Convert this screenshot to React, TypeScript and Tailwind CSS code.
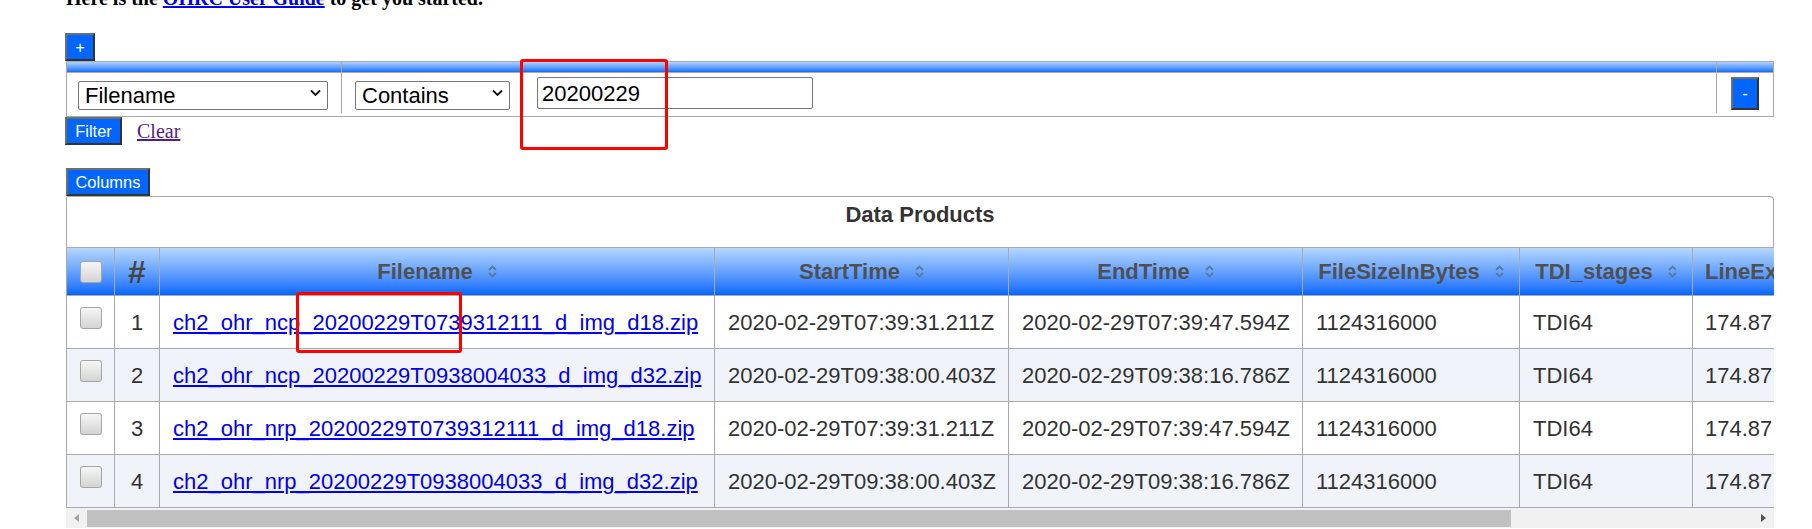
import React from "react";

const rows = [
  {
    n: 1,
    file: "ch2_ohr_ncp_20200229T0739312111_d_img_d18.zip",
    start: "2020-02-29T07:39:31.211Z",
    end: "2020-02-29T07:39:47.594Z",
  },
  {
    n: 2,
    file: "ch2_ohr_ncp_20200229T0938004033_d_img_d32.zip",
    start: "2020-02-29T09:38:00.403Z",
    end: "2020-02-29T09:38:16.786Z",
  },
  {
    n: 3,
    file: "ch2_ohr_nrp_20200229T0739312111_d_img_d18.zip",
    start: "2020-02-29T07:39:31.211Z",
    end: "2020-02-29T07:39:47.594Z",
  },
  {
    n: 4,
    file: "ch2_ohr_nrp_20200229T0938004033_d_img_d32.zip",
    start: "2020-02-29T09:38:00.403Z",
    end: "2020-02-29T09:38:16.786Z",
  },
];

const btn =
  "bg-[#0066ff] text-white text-[16.5px] leading-none border-2 border-t-[#6e6e6e] border-l-[#6e6e6e] border-b-[#333] border-r-[#333] flex items-center justify-center";

function SortIcon() {
  return (
    <svg width="9" height="13" viewBox="0 0 9 13" className="shrink-0">
      <polyline points="1,5 4.5,1.5 8,5" fill="none" stroke="#5a7b9b" strokeWidth="1.8" />
      <polyline points="1,8 4.5,11.5 8,8" fill="none" stroke="#5a7b9b" strokeWidth="1.8" />
    </svg>
  );
}

function Chevron() {
  return (
    <svg width="11" height="7" viewBox="0 0 11 7" className="absolute right-[7px] top-1/2 -translate-y-1/2 pointer-events-none">
      <polyline points="1,1 5.5,5.5 10,1" fill="none" stroke="#111" strokeWidth="1.8" />
    </svg>
  );
}

function Checkbox({ className = "" }: { className?: string }) {
  return (
    <div
      className={
        "w-[22px] h-[22px] rounded-[3px] border border-[#a5a5a5] bg-linear-to-b from-[#f6f6f6] to-[#d4d4d4] " +
        className
      }
    />
  );
}

function HeadCell({ label, w }: { label: string; w: string }) {
  return (
    <div className={"shrink-0 h-full border-r border-[#aaa] flex items-center justify-center gap-[15px] " + w}>
      <span className="font-bold text-[#505050]">{label}</span>
      <SortIcon />
    </div>
  );
}

export default function App() {
  return (
    <div className="w-[1812px] h-[529px] overflow-hidden bg-white font-['Liberation_Sans',Arial,sans-serif] text-[22px]">
      <div className="pl-[66px] w-[1774px]">
        <p className="mt-[-13px] h-[23px] leading-[23px] font-['Liberation_Serif','Times_New_Roman',serif] font-bold text-[20px] text-black whitespace-nowrap">
          Here is the{" "}
          <a href="#" className="text-[#0000ee] underline">
            OHRC User Guide
          </a>{" "}
          to get you started.
        </p>

        <div className="mt-[23px] flex">
          <button className={btn + " w-[30px] h-[28px] -ml-px"}>+</button>
        </div>

        {/* filter table */}
        <div className="w-[1708px] border border-[#aaa]">
          <div className="flex h-[10px]">
            <div className="w-[275px] border-r border-[#aaa] bg-linear-to-b from-[#b0d2ff] to-[#0a6cff]" />
            <div className="flex-1 border-r border-[#aaa] bg-linear-to-b from-[#b0d2ff] to-[#0a6cff]" />
            <div className="w-[56px] bg-linear-to-b from-[#b0d2ff] to-[#0a6cff]" />
          </div>
          <div className="flex h-[44px] border-t border-[#aaa] pb-[3px]">
            <div className="w-[275px] border-r border-[#aaa] flex items-center pl-[11px]">
              <div className="relative w-[250px] h-[29px]">
                <select className="appearance-none w-full h-full border border-[#767676] rounded-[2px] bg-white pl-[6px] text-[22px] text-black leading-none">
                  <option>Filename</option>
                </select>
                <Chevron />
              </div>
            </div>
            <div className="flex-1 border-r border-[#aaa] flex items-center pl-[13px] gap-[27px]">
              <div className="relative w-[155px] h-[29px]">
                <select className="appearance-none w-full h-full border border-[#767676] rounded-[2px] bg-white pl-[6px] text-[22px] text-black leading-none">
                  <option>Contains</option>
                </select>
                <Chevron />
              </div>
              <input
                readOnly
                value="20200229"
                className="w-[276px] h-[32px] border border-[#767676] rounded-[2px] pl-[4px] text-[22px] text-black outline-none"
              />
            </div>
            <div className="w-[56px] flex items-center justify-center">
              <button className={btn + " w-[28px] h-[33px]"}>-</button>
            </div>
          </div>
        </div>

        <div className="flex items-center h-[28px]">
          <button className={btn + " w-[57px] h-[28px] -ml-px"}>Filter</button>
          <a href="#" className="ml-[15px] font-['Liberation_Serif','Times_New_Roman',serif] text-[20px] text-[#551a8b] underline leading-none">
            Clear
          </a>
        </div>

        <div className="mt-[23px] flex">
          <button className={btn + " w-[84px] h-[28px]"}>Columns</button>
        </div>

        {/* data table */}
        <div className="w-[1708px] overflow-hidden">
          <div className="h-[51px] border-t border-x border-[#aaa] rounded-tr-[4px] rounded-tl-[2px] flex items-center justify-center">
            <span className="font-bold text-[#333] -mt-[15px]">Data Products</span>
          </div>
          <div className="w-[2300px] border-l border-[#aaa]">
            <div className="flex h-[49px] border-y border-[#aaa] bg-linear-to-b from-[#b6d6ff] to-[#0066ff]">
              <div className="w-[48px] shrink-0 border-r border-[#aaa] flex items-center justify-center">
                <Checkbox />
              </div>
              <div className="w-[45px] shrink-0 border-r border-[#aaa] flex items-center justify-center">
                <span className="font-bold text-[32px] leading-none text-[#444]">#</span>
              </div>
              <HeadCell label="Filename" w="w-[555px]" />
              <HeadCell label="StartTime" w="w-[294px]" />
              <HeadCell label="EndTime" w="w-[294px]" />
              <HeadCell label="FileSizeInBytes" w="w-[217px]" />
              <HeadCell label="TDI_stages" w="w-[173px]" />
              <div className="w-[330px] shrink-0 h-full border-r border-[#aaa] flex items-center pl-[12px] gap-[15px]">
                <span className="font-bold text-[#505050]">LineExposureDuration</span>
                <SortIcon />
              </div>
            </div>
            {rows.map((r) => (
              <div
                key={r.n}
                className={
                  "flex h-[53px] border-b border-[#aaa] text-[#333] " +
                  (r.n % 2 === 0 ? "bg-[#f0f4fa]" : "bg-white")
                }
              >
                <div className="w-[48px] shrink-0 border-r border-[#aaa] flex items-center justify-center">
                  <Checkbox className="mb-[9px]" />
                </div>
                <div className="w-[45px] shrink-0 border-r border-[#aaa] flex items-center justify-center">
                  {r.n}
                </div>
                <div className="w-[555px] shrink-0 border-r border-[#aaa] flex items-center pl-[13px]">
                  <a href="#" className="text-[#0000ee] underline">
                    {r.file}
                  </a>
                </div>
                <div className="w-[294px] shrink-0 border-r border-[#aaa] flex items-center pl-[13px]">{r.start}</div>
                <div className="w-[294px] shrink-0 border-r border-[#aaa] flex items-center pl-[13px]">{r.end}</div>
                <div className="w-[217px] shrink-0 border-r border-[#aaa] flex items-center pl-[13px]">1124316000</div>
                <div className="w-[173px] shrink-0 border-r border-[#aaa] flex items-center pl-[13px]">TDI64</div>
                <div className="w-[330px] shrink-0 border-r border-[#aaa] flex items-center pl-[12px]">174.87</div>
              </div>
            ))}
          </div>
          {/* horizontal scrollbar */}
          <div className="h-[20px] bg-[#f1f1f1] flex items-center">
            <div className="w-[21px] h-full flex items-center justify-center">
              <svg width="5" height="8" viewBox="0 0 5 8">
                <polygon points="5,0 0,4 5,8" fill="#a3a3a3" />
              </svg>
            </div>
            <div className="w-[1424px] h-[17px] bg-[#c1c1c1]" />
            <div className="flex-1" />
            <div className="w-[21px] h-full flex items-center justify-center">
              <svg width="5" height="8" viewBox="0 0 5 8">
                <polygon points="0,0 5,4 0,8" fill="#505050" />
              </svg>
            </div>
          </div>
        </div>
      </div>

      {/* annotation boxes */}
      <div className="absolute left-[520px] top-[59px] w-[148px] h-[91px] border-[3px] border-[#ff0000] rounded-[3px]" />
      <div className="absolute left-[296px] top-[292px] w-[166px] h-[61px] border-[3px] border-[#ff0000] rounded-[3px]" />
    </div>
  );
}
